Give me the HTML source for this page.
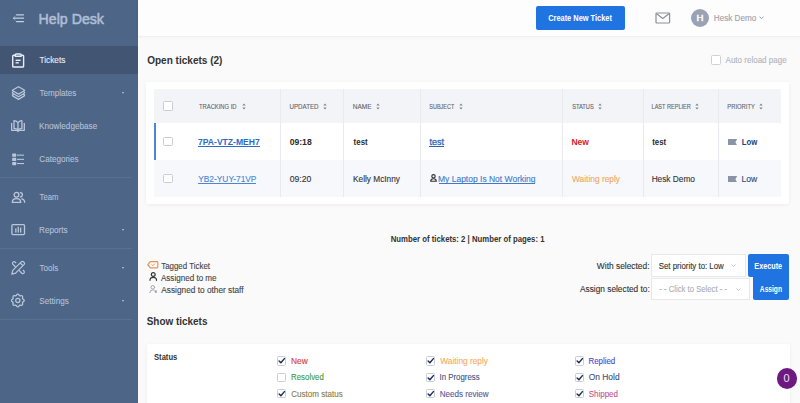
<!DOCTYPE html>
<html><head><meta charset="utf-8">
<style>
*{margin:0;padding:0;box-sizing:border-box}
html,body{width:800px;height:403px;overflow:hidden;background:#fafafa;font-family:"Liberation Sans",sans-serif;color:#333}
.a{position:absolute;white-space:nowrap}
#side{position:absolute;left:0;top:0;width:138px;height:403px;background:#4d6586}
.act{position:absolute;left:0;top:46px;width:137.5px;height:28px;background:#425674}
.sep{position:absolute;left:0;width:132px;height:1px;background:#5d7597;opacity:.7}
.ic{position:absolute;left:11px;width:15px;height:15px}
.caret{position:absolute;left:121.8px;width:0;height:0;border-left:1.7px solid transparent;border-right:1.7px solid transparent;border-top:2.2px solid #bac7db;margin-top:0.2px}
#hdr{position:absolute;left:138px;top:0;width:662px;height:36.5px;background:#fdfdfd;border-bottom:1px solid #f1f1f2;box-shadow:0 0 3px rgba(0,0,0,.05)}
.btn{position:absolute;background:#1f74e2;border-radius:2px}
.card{position:absolute;background:#fff;box-shadow:0 1px 4px rgba(0,0,0,.06);border-radius:2px}
.cb{position:absolute;width:9.5px;height:9.5px;border:1px solid #c8ccd3;border-radius:1.5px;background:#fff}
.vl{position:absolute;top:89px;width:1px;height:107.5px;background:#e8eaef}
#txt{position:absolute;left:0;top:0;font-family:"Liberation Sans",sans-serif}
</style></head><body>
<div id="side">
  <!-- hamburger -->
  <svg class="a" style="left:11px;top:11px" width="16" height="14" viewBox="0 0 16 14">
    <g stroke="#c1cfe4" stroke-width="1.3" fill="none" stroke-linecap="round">
      <line x1="5.5" y1="3.8" x2="12.5" y2="3.8"/>
      <line x1="2.5" y1="7.2" x2="12.5" y2="7.2"/>
      <line x1="5.5" y1="10.6" x2="12.5" y2="10.6"/>
      <polyline points="4.2,5.4 2.3,7.2 4.2,9" stroke-width="1" opacity=".6"/>
    </g>
  </svg>
  <div class="act"></div>
  <!-- tickets icon -->
  <svg class="ic" style="top:53px" width="15" height="15" viewBox="0 0 15 15">
    <g stroke="#e6edf7" stroke-width="1.4" fill="none" stroke-linejoin="round">
      <path d="M4.2 2.3 H2.6 Q1.7 2.3 1.7 3.2 V13.2 Q1.7 14 2.6 14 H11.8 Q12.6 14 12.6 13.2 V3.2 Q12.6 2.3 11.8 2.3 H10.2"/>
      <path d="M4.2 3.3 V2 Q4.2 1 5.2 1 H9.2 Q10.2 1 10.2 2 V3.3 Z"/>
      <line x1="4.6" y1="7.3" x2="9.6" y2="7.3"/>
      <line x1="4.6" y1="9.8" x2="7.8" y2="9.8"/>
    </g>
  </svg>
  <!-- templates icon -->
  <svg class="ic" style="top:86px" width="15" height="15" viewBox="0 0 15 15">
    <g stroke="#bac7db" stroke-width="1.25" fill="none" stroke-linejoin="round" stroke-linecap="round">
      <path d="M7.5 0.7 L13.3 4 Q14 4.4 13.3 4.8 L7.5 8.1 L1.7 4.8 Q1 4.4 1.7 4 Z"/>
      <path d="M2.3 5.7 Q0.9 6.6 1.7 7.2 L7.5 10.7 L13.3 7.2 Q14.1 6.6 12.7 5.7"/>
      <path d="M2.3 8.4 Q0.9 9.3 1.7 9.9 L7.5 13.4 L13.3 9.9 Q14.1 9.3 12.7 8.4"/>
    </g>
  </svg>
  <div class="caret" style="top:92px"></div>
  <!-- knowledgebase icon -->
  <svg class="ic" style="top:119px" width="15" height="15" viewBox="0 0 15 15">
    <g stroke="#bac7db" stroke-width="1.3" fill="none" stroke-linejoin="round">
      <path d="M0.6 3.9 V11.3 H5.3 Q6.95 11.3 6.95 12.5 Q6.95 11.3 8.6 11.3 H13.3 V3.9"/>
      <path d="M6.95 10.8 V3.6 Q5 1.5 3 1.6 V9.5 Q5.3 9.6 6.95 10.8 Q8.6 9.6 10.9 9.5 V1.6 Q8.9 1.5 6.95 3.6"/>
    </g>
  </svg>
  <!-- categories icon -->
  <svg class="ic" style="top:152px" width="15" height="15" viewBox="0 0 15 15">
    <g fill="#bac7db">
      <rect x="1.2" y="1.6" width="4" height="3.2" rx=".6"/>
      <rect x="1.2" y="5.8" width="4" height="3.2" rx=".6"/>
      <rect x="1.2" y="10" width="4" height="3.2" rx=".6"/>
      <rect x="6" y="2.6" width="7" height="1.1"/>
      <rect x="6" y="6.8" width="7" height="1.1"/>
      <rect x="6" y="11" width="7" height="1.1"/>
    </g>
  </svg>
  <div class="sep" style="top:177px"></div>
  <!-- team icon -->
  <svg class="ic" style="top:190px" width="15" height="15" viewBox="0 0 15 15">
    <g stroke="#bac7db" stroke-width="1.3" fill="none" stroke-linecap="round">
      <circle cx="5.5" cy="4.8" r="2.4"/>
      <path d="M1.3 12.3 Q1.3 8.6 5.5 8.6 Q9.7 8.6 9.7 12.3 Z"/>
      <path d="M9.3 2.6 Q11.4 2.6 11.4 4.8 Q11.4 6.8 9.6 7"/>
      <path d="M10.8 8.8 Q13.7 9.5 13.7 12.3"/>
    </g>
  </svg>
  <!-- reports icon -->
  <svg class="ic" style="top:222px" width="15" height="15" viewBox="0 0 15 15">
    <g stroke="#bac7db" fill="none">
      <rect x="0.9" y="2.6" width="12.6" height="10" rx="1" stroke-width="1.3"/>
    </g>
    <g fill="#bac7db">
      <rect x="4.2" y="6.4" width="1.3" height="4.2"/>
      <rect x="6.6" y="4.8" width="1.3" height="5.8"/>
      <rect x="9" y="5.6" width="1.3" height="5"/>
    </g>
  </svg>
  <div class="caret" style="top:228.5px"></div>
  <div class="sep" style="top:248px"></div>
  <!-- tools icon -->
  <svg class="ic" style="top:259.5px;left:10.5px" width="16" height="16" viewBox="0 0 15 15">
    <g stroke="#bac7db" stroke-width="1.15" fill="none" stroke-linejoin="round" transform="translate(7.5 7.5) scale(1.08) translate(-7.5 -7.5)">
      <path d="M1.3 13.7 L2.2 10.2 L10.3 2.1 Q11.1 1.4 12.1 2.2 L12.8 2.9 Q13.5 3.8 12.8 4.6 L4.8 12.7 Z"/>
      <path d="M9.1 3.3 L11.6 5.8"/>
      <path d="M4.8 7 L2.2 4.4 Q1.5 3.4 2.3 2.5 Q3.3 1.6 4.3 2.4 L5.3 3.4"/>
      <path d="M8 10.2 L10.6 12.8 Q11.6 13.6 12.5 12.7 Q13.3 11.7 12.6 10.8 L11.6 9.8"/>
    </g>
  </svg>
  <div class="caret" style="top:266.5px"></div>
  <!-- settings icon -->
  <svg class="ic" style="top:293px" width="15" height="15" viewBox="0 0 15 15">
    <g stroke="#bac7db" stroke-width="1.25" fill="none" stroke-linejoin="round">
      <path d="M6.80 1.10 L7.21 1.20 L7.59 1.48 L7.92 1.86 L8.20 2.26 L8.47 2.59 L8.75 2.79 L9.09 2.85 L9.51 2.80 L9.99 2.72 L10.50 2.68 L10.96 2.75 L11.33 2.97 L11.55 3.34 L11.62 3.80 L11.58 4.31 L11.50 4.79 L11.45 5.21 L11.51 5.55 L11.71 5.83 L12.04 6.10 L12.44 6.38 L12.82 6.71 L13.10 7.09 L13.20 7.50 L13.10 7.91 L12.82 8.29 L12.44 8.62 L12.04 8.90 L11.71 9.17 L11.51 9.45 L11.45 9.79 L11.50 10.21 L11.58 10.69 L11.62 11.20 L11.55 11.66 L11.33 12.03 L10.96 12.25 L10.50 12.32 L9.99 12.28 L9.51 12.20 L9.09 12.15 L8.75 12.21 L8.47 12.41 L8.20 12.74 L7.92 13.14 L7.59 13.52 L7.21 13.80 L6.80 13.90 L6.39 13.80 L6.01 13.52 L5.68 13.14 L5.40 12.74 L5.13 12.41 L4.85 12.21 L4.51 12.15 L4.09 12.20 L3.61 12.28 L3.10 12.32 L2.64 12.25 L2.27 12.03 L2.05 11.66 L1.98 11.20 L2.02 10.69 L2.10 10.21 L2.15 9.79 L2.09 9.45 L1.89 9.17 L1.56 8.90 L1.16 8.62 L0.78 8.29 L0.50 7.91 L0.40 7.50 L0.50 7.09 L0.78 6.71 L1.16 6.38 L1.56 6.10 L1.89 5.83 L2.09 5.55 L2.15 5.21 L2.10 4.79 L2.02 4.31 L1.98 3.80 L2.05 3.34 L2.27 2.97 L2.64 2.75 L3.10 2.68 L3.61 2.72 L4.09 2.80 L4.51 2.85 L4.85 2.79 L5.13 2.59 L5.40 2.26 L5.68 1.86 L6.01 1.48 L6.39 1.20 Z"/>
      <circle cx="6.8" cy="7.5" r="2.1"/>
    </g>
  </svg>
  <div class="caret" style="top:299.5px"></div>
  <div class="sep" style="top:319px"></div>
</div>

<div id="hdr"></div>
<div class="btn" style="left:536px;top:6px;width:89px;height:24px"></div>
<svg class="a" style="left:655px;top:12px" width="16" height="12" viewBox="0 0 16 12">
  <g stroke="#8e9096" stroke-width="1.2" fill="none" stroke-linejoin="round">
    <rect x="1" y="1" width="13.6" height="10" rx=".8"/>
    <path d="M1.3 1.6 L7.8 6.5 L14.3 1.6"/>
  </g>
</svg>
<div class="a" style="left:690.8px;top:8.8px;width:18.6px;height:18.6px;border-radius:50%;background:#9aa3b5"></div>
<svg class="a" style="left:758.6px;top:16.4px" width="5.5" height="3.5" viewBox="0 0 5.5 3.5"><polyline points="0.6,0.7 2.6,2.6 4.6,0.7" stroke="#9ca1a9" stroke-width="1" fill="none"/></svg>

<div class="cb" style="left:711px;top:55px;border-color:#cdd1d8"></div>

<!-- tickets card -->
<div class="card" style="left:146.3px;top:81.8px;width:642.8px;height:122.4px"></div>
<div class="a" style="left:153.6px;top:88.7px;width:627.8px;height:34.3px;background:#f3f4f7"></div>
<div class="a" style="left:153.6px;top:123px;width:627.8px;height:37px;background:#fff"></div>
<div class="a" style="left:153.6px;top:160px;width:627.8px;height:36.5px;background:#f6f8fc"></div>
<div class="a" style="left:153.6px;top:122.8px;width:2px;height:37px;background:#4a86dc"></div>
<div class="vl" style="left:280px"></div>
<div class="vl" style="left:343px"></div>
<div class="vl" style="left:419.5px"></div>
<div class="vl" style="left:562px"></div>
<div class="vl" style="left:642.5px"></div>
<div class="vl" style="left:718px"></div>

<div class="cb" style="left:163.2px;top:101px"></div>
<div class="cb" style="left:163.3px;top:136.5px"></div>
<div class="cb" style="left:163.3px;top:173.5px"></div>
<svg class="a" style="left:241.8px;top:102.5px" width="4" height="8" viewBox="0 0 4 8"><path d="M0.3 2.5 L2 0.4 L3.7 2.5 Z M0.3 4.5 L2 6.6 L3.7 4.5 Z" fill="#80858d"/></svg><svg class="a" style="left:323.1px;top:102.5px" width="4" height="8" viewBox="0 0 4 8"><path d="M0.3 2.5 L2 0.4 L3.7 2.5 Z M0.3 4.5 L2 6.6 L3.7 4.5 Z" fill="#80858d"/></svg><svg class="a" style="left:375.6px;top:102.5px" width="4" height="8" viewBox="0 0 4 8"><path d="M0.3 2.5 L2 0.4 L3.7 2.5 Z M0.3 4.5 L2 6.6 L3.7 4.5 Z" fill="#80858d"/></svg><svg class="a" style="left:459.3px;top:102.5px" width="4" height="8" viewBox="0 0 4 8"><path d="M0.3 2.5 L2 0.4 L3.7 2.5 Z M0.3 4.5 L2 6.6 L3.7 4.5 Z" fill="#80858d"/></svg><svg class="a" style="left:598.3px;top:102.5px" width="4" height="8" viewBox="0 0 4 8"><path d="M0.3 2.5 L2 0.4 L3.7 2.5 Z M0.3 4.5 L2 6.6 L3.7 4.5 Z" fill="#80858d"/></svg><svg class="a" style="left:695.4px;top:102.5px" width="4" height="8" viewBox="0 0 4 8"><path d="M0.3 2.5 L2 0.4 L3.7 2.5 Z M0.3 4.5 L2 6.6 L3.7 4.5 Z" fill="#80858d"/></svg><svg class="a" style="left:759.1999999999999px;top:102.5px" width="4" height="8" viewBox="0 0 4 8"><path d="M0.3 2.5 L2 0.4 L3.7 2.5 Z M0.3 4.5 L2 6.6 L3.7 4.5 Z" fill="#80858d"/></svg>
<div class="a" style="left:198.2px;top:146.4px;width:61.400000000000034px;height:0.7px;background:#2e6bc9"></div><div class="a" style="left:429.4px;top:146.4px;width:14.900000000000034px;height:0.65px;background:#2d62b8"></div><div class="a" style="left:198.2px;top:183.1px;width:58.10000000000002px;height:0.65px;background:#4a86d3"></div><div class="a" style="left:438.5px;top:183.1px;width:96.79999999999995px;height:0.65px;background:#3e7acb"></div>

<!-- flags -->
<svg class="a" style="left:728px;top:138.8px" width="9.5" height="6.5" viewBox="0 0 9.5 6.5"><path d="M0 0 H9.2 L7.4 3.25 L9.2 6.5 H0 Z" fill="#8a93a7"/></svg>
<svg class="a" style="left:728px;top:175.5px" width="9.5" height="6.5" viewBox="0 0 9.5 6.5"><path d="M0 0 H9.2 L7.4 3.25 L9.2 6.5 H0 Z" fill="#8a93a7"/></svg>
<!-- person icon subject -->
<svg class="a" style="left:429.5px;top:173.5px" width="8" height="8" viewBox="0 0 8 8"><g stroke="#333" stroke-width="1.15" fill="none"><circle cx="3.5" cy="2.3" r="1.7"/><path d="M0.7 7.2 Q0.7 4.7 3.5 4.7 Q6.3 4.7 6.3 7.2 Z"/></g></svg>

<!-- legend -->
<svg class="a" style="left:147.3px;top:261.2px" width="11.5" height="7.5" viewBox="0 0 11.5 7.5"><g stroke="#e5935c" stroke-width="1.2" fill="none" stroke-linejoin="round"><path d="M3.3 0.7 H10.1 Q10.8 0.7 10.8 1.4 V6.1 Q10.8 6.8 10.1 6.8 H3.3 L0.8 3.75 Z"/><polyline points="4.6,3.6 5.9,4.7 7.9,2.6" stroke-width="1"/></g></svg>
<svg class="a" style="left:148.7px;top:272px" width="8.5" height="9" viewBox="0 0 8.5 9"><g stroke="#333" stroke-width="1.2" fill="none" stroke-linecap="round"><circle cx="4.25" cy="2.5" r="1.9"/><path d="M1 8.3 Q1 5.3 4.25 5.3 Q7.5 5.3 7.5 8.3"/></g></svg>
<svg class="a" style="left:148.7px;top:284.6px" width="8.5" height="8.5" viewBox="0 0 8.5 8.5"><g stroke="#a3a7ae" stroke-width="1" fill="none" stroke-linecap="round"><circle cx="3.8" cy="2.3" r="1.8"/><path d="M0.8 7.6 Q0.8 4.9 3.8 4.9 Q4.6 4.9 5.2 5.2"/></g><circle cx="6.9" cy="6.6" r="1.3" fill="#a3a7ae"/></svg>

<!-- actions -->
<div class="a" style="left:651.3px;top:253.6px;width:94.4px;height:23px;background:#fff;border:1px solid #e6e8ec"></div>
<svg class="a" style="left:731px;top:264px" width="5" height="3" viewBox="0 0 5 3"><polyline points="0.5,0.5 2.5,2.5 4.5,0.5" stroke="#b8bcc3" stroke-width=".8" fill="none"/></svg>
<div class="btn" style="left:748.2px;top:253.8px;width:40.5px;height:23px;border-radius:2px 2px 0 2px"></div>
<div class="a" style="left:650.7px;top:277.6px;width:99.8px;height:22.6px;background:#fff;border:1px solid #e6e8ec"></div>
<svg class="a" style="left:736px;top:287.5px" width="5" height="3" viewBox="0 0 5 3"><polyline points="0.5,0.5 2.5,2.5 4.5,0.5" stroke="#b8bcc3" stroke-width=".8" fill="none"/></svg>
<div class="btn" style="left:752.5px;top:276.6px;width:36.2px;height:23.2px;border-radius:0 0 2px 2px"></div>

<!-- show tickets card -->
<div class="card" style="left:147px;top:343.5px;width:642.5px;height:70px"></div>
<div class="cb" style="left:277.2px;top:356.3px;width:9.3px;height:9.3px;border-color:#c9cdd4"></div><svg class="a" style="left:277.2px;top:356.3px" width="9.3" height="9.3" viewBox="0 0 9.3 9.3"><path d="M2.1 5.0 L3.9 6.7 L7.4 2.6" stroke="#1d2f57" stroke-width="1.45" fill="none" stroke-linecap="round" stroke-linejoin="round"/></svg>
<div class="cb" style="left:277.2px;top:372.6px;width:9.3px;height:9.3px;border-color:#c9cdd4"></div>
<div class="cb" style="left:277.2px;top:388.8px;width:9.3px;height:9.3px;border-color:#c9cdd4"></div><svg class="a" style="left:277.2px;top:388.8px" width="9.3" height="9.3" viewBox="0 0 9.3 9.3"><path d="M2.1 5.0 L3.9 6.7 L7.4 2.6" stroke="#1d2f57" stroke-width="1.45" fill="none" stroke-linecap="round" stroke-linejoin="round"/></svg>
<div class="cb" style="left:425.9px;top:356.3px;width:9.3px;height:9.3px;border-color:#c9cdd4"></div><svg class="a" style="left:425.9px;top:356.3px" width="9.3" height="9.3" viewBox="0 0 9.3 9.3"><path d="M2.1 5.0 L3.9 6.7 L7.4 2.6" stroke="#1d2f57" stroke-width="1.45" fill="none" stroke-linecap="round" stroke-linejoin="round"/></svg>
<div class="cb" style="left:425.9px;top:372.6px;width:9.3px;height:9.3px;border-color:#c9cdd4"></div><svg class="a" style="left:425.9px;top:372.6px" width="9.3" height="9.3" viewBox="0 0 9.3 9.3"><path d="M2.1 5.0 L3.9 6.7 L7.4 2.6" stroke="#1d2f57" stroke-width="1.45" fill="none" stroke-linecap="round" stroke-linejoin="round"/></svg>
<div class="cb" style="left:425.9px;top:388.8px;width:9.3px;height:9.3px;border-color:#c9cdd4"></div><svg class="a" style="left:425.9px;top:388.8px" width="9.3" height="9.3" viewBox="0 0 9.3 9.3"><path d="M2.1 5.0 L3.9 6.7 L7.4 2.6" stroke="#1d2f57" stroke-width="1.45" fill="none" stroke-linecap="round" stroke-linejoin="round"/></svg>
<div class="cb" style="left:574.6px;top:356.3px;width:9.3px;height:9.3px;border-color:#c9cdd4"></div><svg class="a" style="left:574.6px;top:356.3px" width="9.3" height="9.3" viewBox="0 0 9.3 9.3"><path d="M2.1 5.0 L3.9 6.7 L7.4 2.6" stroke="#1d2f57" stroke-width="1.45" fill="none" stroke-linecap="round" stroke-linejoin="round"/></svg>
<div class="cb" style="left:574.6px;top:372.6px;width:9.3px;height:9.3px;border-color:#c9cdd4"></div><svg class="a" style="left:574.6px;top:372.6px" width="9.3" height="9.3" viewBox="0 0 9.3 9.3"><path d="M2.1 5.0 L3.9 6.7 L7.4 2.6" stroke="#1d2f57" stroke-width="1.45" fill="none" stroke-linecap="round" stroke-linejoin="round"/></svg>
<div class="cb" style="left:574.6px;top:388.8px;width:9.3px;height:9.3px;border-color:#c9cdd4"></div><svg class="a" style="left:574.6px;top:388.8px" width="9.3" height="9.3" viewBox="0 0 9.3 9.3"><path d="M2.1 5.0 L3.9 6.7 L7.4 2.6" stroke="#1d2f57" stroke-width="1.45" fill="none" stroke-linecap="round" stroke-linejoin="round"/></svg>


<div class="a" style="left:776.7px;top:368.2px;width:20.5px;height:20.5px;border-radius:50%;background:#6d1a80"></div>

<svg id="txt" width="800" height="403" viewBox="0 0 800 403">
<text x="38.57" y="24.10" font-size="14.6" fill="#afbed5" textLength="65.40" lengthAdjust="spacingAndGlyphs" stroke="#afbed5" stroke-width="0.55">Help Desk</text>
<text x="39.54" y="63.30" font-size="9.1" fill="#e6ecf5" textLength="25.75" lengthAdjust="spacingAndGlyphs" stroke="#e6ecf5" stroke-width="0.12">Tickets</text>
<text x="39.54" y="96.00" font-size="9.1" fill="#b3c1d6" textLength="36.78" lengthAdjust="spacingAndGlyphs" stroke="#b3c1d6" stroke-width="0.1">Templates</text>
<text x="39.05" y="128.90" font-size="9.1" fill="#b3c1d6" textLength="58.14" lengthAdjust="spacingAndGlyphs" stroke="#b3c1d6" stroke-width="0.1">Knowledgebase</text>
<text x="39.29" y="162.10" font-size="9.1" fill="#b3c1d6" textLength="39.20" lengthAdjust="spacingAndGlyphs" stroke="#b3c1d6" stroke-width="0.1">Categories</text>
<text x="39.55" y="199.75" font-size="9.1" fill="#b3c1d6" textLength="18.90" lengthAdjust="spacingAndGlyphs" stroke="#b3c1d6" stroke-width="0.1">Team</text>
<text x="39.05" y="232.80" font-size="9.1" fill="#b3c1d6" textLength="28.65" lengthAdjust="spacingAndGlyphs" stroke="#b3c1d6" stroke-width="0.1">Reports</text>
<text x="39.54" y="270.70" font-size="9.1" fill="#b3c1d6" textLength="18.64" lengthAdjust="spacingAndGlyphs" stroke="#b3c1d6" stroke-width="0.1">Tools</text>
<text x="39.33" y="303.50" font-size="9.1" fill="#b3c1d6" textLength="29.44" lengthAdjust="spacingAndGlyphs" stroke="#b3c1d6" stroke-width="0.1">Settings</text>
<text x="548.20" y="21.00" font-size="8.6" font-weight="bold" fill="#ffffff" textLength="63.68" lengthAdjust="spacingAndGlyphs">Create New Ticket</text>
<text x="696.43" y="21.00" font-size="8.3" fill="#ffffff" textLength="6.96" lengthAdjust="spacingAndGlyphs" stroke="#ffffff" stroke-width="0.45">H</text>
<text x="713.85" y="20.80" font-size="8.2" fill="#9da2aa" textLength="42.47" lengthAdjust="spacingAndGlyphs" stroke="#9da2aa" stroke-width="0.12">Hesk Demo</text>
<text x="147.20" y="63.90" font-size="11.4" font-weight="bold" fill="#333333" textLength="75.27" lengthAdjust="spacingAndGlyphs">Open tickets (2)</text>
<text x="725.56" y="63.10" font-size="8.3" fill="#b1b6bf" textLength="61.07" lengthAdjust="spacingAndGlyphs" stroke="#b1b6bf" stroke-width="0.12">Auto reload page</text>
<text x="198.98" y="109.00" font-size="6.5" fill="#5f636b" textLength="37.58" lengthAdjust="spacingAndGlyphs" stroke="#5f636b" stroke-width="0.1">TRACKING ID</text>
<text x="289.54" y="109.00" font-size="6.5" fill="#5f636b" textLength="29.02" lengthAdjust="spacingAndGlyphs" stroke="#5f636b" stroke-width="0.1">UPDATED</text>
<text x="352.73" y="109.00" font-size="6.5" fill="#5f636b" textLength="18.81" lengthAdjust="spacingAndGlyphs" stroke="#5f636b" stroke-width="0.1">NAME</text>
<text x="429.25" y="109.00" font-size="6.5" fill="#5f636b" textLength="25.12" lengthAdjust="spacingAndGlyphs" stroke="#5f636b" stroke-width="0.1">SUBJECT</text>
<text x="572.14" y="109.00" font-size="6.5" fill="#5f636b" textLength="21.62" lengthAdjust="spacingAndGlyphs" stroke="#5f636b" stroke-width="0.1">STATUS</text>
<text x="651.55" y="109.00" font-size="6.5" fill="#5f636b" textLength="39.30" lengthAdjust="spacingAndGlyphs" stroke="#5f636b" stroke-width="0.1">LAST REPLIER</text>
<text x="727.33" y="109.00" font-size="6.5" fill="#5f636b" textLength="27.50" lengthAdjust="spacingAndGlyphs" stroke="#5f636b" stroke-width="0.1">PRIORITY</text>
<text x="198.01" y="145.30" font-size="9.4" font-weight="bold" fill="#2e6bc9" textLength="61.77" lengthAdjust="spacingAndGlyphs">7PA-VTZ-MEH7</text>
<text x="289.66" y="145.30" font-size="9.4" font-weight="bold" fill="#2b2b2b" textLength="22.03" lengthAdjust="spacingAndGlyphs">09:18</text>
<text x="353.62" y="145.30" font-size="9.4" font-weight="bold" fill="#2b2b2b" textLength="14.09" lengthAdjust="spacingAndGlyphs">test</text>
<text x="429.46" y="145.30" font-size="9.4" fill="#2d62b8" textLength="14.60" lengthAdjust="spacingAndGlyphs" stroke="#2d62b8" stroke-width="0.28">test</text>
<text x="571.45" y="145.30" font-size="9.4" font-weight="bold" fill="#d3232c" textLength="17.52" lengthAdjust="spacingAndGlyphs">New</text>
<text x="652.22" y="145.30" font-size="9.4" font-weight="bold" fill="#2b2b2b" textLength="13.98" lengthAdjust="spacingAndGlyphs">test</text>
<text x="741.70" y="145.30" font-size="9.4" font-weight="bold" fill="#22427a" textLength="15.50" lengthAdjust="spacingAndGlyphs">Low</text>
<text x="198.19" y="182.00" font-size="9.4" fill="#4a86d3" textLength="58.25" lengthAdjust="spacingAndGlyphs" stroke="#4a86d3" stroke-width="0.12">YB2-YUY-71VP</text>
<text x="289.65" y="182.00" font-size="9.4" fill="#333333" textLength="21.72" lengthAdjust="spacingAndGlyphs" stroke="#333333" stroke-width="0.12">09:20</text>
<text x="353.04" y="182.00" font-size="9.4" fill="#333333" textLength="46.89" lengthAdjust="spacingAndGlyphs" stroke="#333333" stroke-width="0.12">Kelly McInny</text>
<text x="438.02" y="182.00" font-size="9.4" fill="#3e7acb" textLength="97.54" lengthAdjust="spacingAndGlyphs" stroke="#3e7acb" stroke-width="0.12">My Laptop Is Not Working</text>
<text x="571.96" y="182.00" font-size="9.4" fill="#f0a85e" textLength="48.07" lengthAdjust="spacingAndGlyphs" stroke="#f0a85e" stroke-width="0.12">Waiting reply</text>
<text x="651.64" y="182.00" font-size="9.4" fill="#333333" textLength="43.28" lengthAdjust="spacingAndGlyphs" stroke="#333333" stroke-width="0.12">Hesk Demo</text>
<text x="741.52" y="182.00" font-size="9.4" fill="#2a4a80" textLength="15.68" lengthAdjust="spacingAndGlyphs" stroke="#2a4a80" stroke-width="0.12">Low</text>
<text x="390.74" y="241.80" font-size="9.6" font-weight="bold" fill="#333333" textLength="153.74" lengthAdjust="spacingAndGlyphs">Number of tickets: 2 | Number of pages: 1</text>
<text x="161.19" y="268.50" font-size="8.9" fill="#444444" textLength="48.85" lengthAdjust="spacingAndGlyphs" stroke="#444444" stroke-width="0.12">Tagged Ticket</text>
<text x="160.96" y="280.60" font-size="8.9" fill="#444444" textLength="55.63" lengthAdjust="spacingAndGlyphs" stroke="#444444" stroke-width="0.12">Assigned to me</text>
<text x="161.31" y="293.10" font-size="8.9" fill="#444444" textLength="82.27" lengthAdjust="spacingAndGlyphs" stroke="#444444" stroke-width="0.12">Assigned to other staff</text>
<text x="596.86" y="268.50" font-size="8.9" fill="#333333" textLength="52.65" lengthAdjust="spacingAndGlyphs" stroke="#333333" stroke-width="0.12">With selected:</text>
<text x="658.75" y="268.50" font-size="8.9" fill="#333333" textLength="65.03" lengthAdjust="spacingAndGlyphs" stroke="#333333" stroke-width="0.12">Set priority to: Low</text>
<text x="754.33" y="269.00" font-size="8.4" font-weight="bold" fill="#ffffff" textLength="27.83" lengthAdjust="spacingAndGlyphs">Execute</text>
<text x="579.96" y="291.60" font-size="8.9" fill="#333333" textLength="69.82" lengthAdjust="spacingAndGlyphs" stroke="#333333" stroke-width="0.12">Assign selected to:</text>
<text x="659.35" y="291.60" font-size="8.9" fill="#a9afb9" textLength="67.69" lengthAdjust="spacingAndGlyphs" stroke="#a9afb9" stroke-width="0.12">- - Click to Select - -</text>
<text x="759.83" y="291.80" font-size="8.4" font-weight="bold" fill="#ffffff" textLength="22.16" lengthAdjust="spacingAndGlyphs">Assign</text>
<text x="146.70" y="325.00" font-size="11.4" font-weight="bold" fill="#333333" textLength="60.72" lengthAdjust="spacingAndGlyphs">Show tickets</text>
<text x="154.02" y="360.00" font-size="8.9" font-weight="bold" fill="#333333" textLength="23.29" lengthAdjust="spacingAndGlyphs">Status</text>
<text x="291.03" y="363.80" font-size="8.6" fill="#d63b40" textLength="16.84" lengthAdjust="spacingAndGlyphs" stroke="#d63b40" stroke-width="0.12">New</text>
<text x="291.07" y="380.00" font-size="8.6" fill="#3f9b41" textLength="32.73" lengthAdjust="spacingAndGlyphs" stroke="#3f9b41" stroke-width="0.12">Resolved</text>
<text x="291.30" y="396.70" font-size="8.6" fill="#8b7b48" textLength="51.39" lengthAdjust="spacingAndGlyphs" stroke="#8b7b48" stroke-width="0.12">Custom status</text>
<text x="440.26" y="363.80" font-size="8.6" fill="#f2ac63" textLength="47.66" lengthAdjust="spacingAndGlyphs" stroke="#f2ac63" stroke-width="0.12">Waiting reply</text>
<text x="439.60" y="380.00" font-size="8.6" fill="#3b578a" textLength="39.96" lengthAdjust="spacingAndGlyphs" stroke="#3b578a" stroke-width="0.12">In Progress</text>
<text x="439.65" y="396.70" font-size="8.6" fill="#5a5998" textLength="48.93" lengthAdjust="spacingAndGlyphs" stroke="#5a5998" stroke-width="0.12">Needs review</text>
<text x="588.47" y="363.80" font-size="8.6" fill="#5247cf" textLength="26.75" lengthAdjust="spacingAndGlyphs" stroke="#5247cf" stroke-width="0.12">Replied</text>
<text x="588.72" y="380.00" font-size="8.6" fill="#3d5079" textLength="30.85" lengthAdjust="spacingAndGlyphs" stroke="#3d5079" stroke-width="0.12">On Hold</text>
<text x="588.74" y="396.70" font-size="8.6" fill="#c65690" textLength="29.18" lengthAdjust="spacingAndGlyphs" stroke="#c65690" stroke-width="0.12">Shipped</text>
<text x="783.46" y="382.20" font-size="10.4" fill="#e8d8ee" textLength="6.09" lengthAdjust="spacingAndGlyphs" stroke="#e8d8ee" stroke-width="0.12">0</text>
</svg>
</body></html>
